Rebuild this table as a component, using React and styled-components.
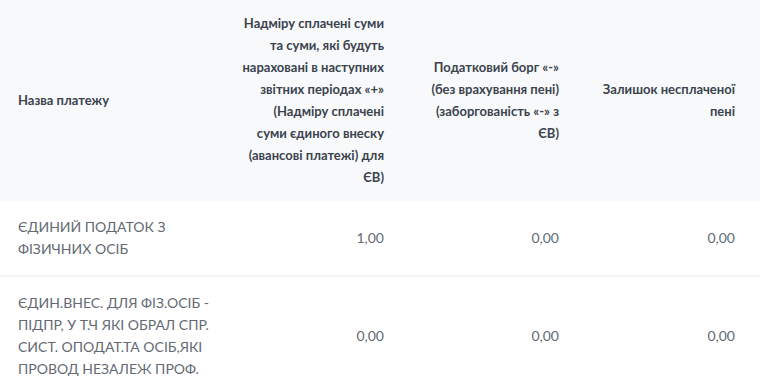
import React from 'react'
import styled, {createGlobalStyle} from 'styled-components'

const GlobalStyle = createGlobalStyle`
  html, body {
    margin: 0;
    padding: 0;
    background: #ffffff;
  }
  body {
    font-family: Lato, "Noto Sans", sans-serif;
  }
`

// titles kept as line lists so the wraps match the original table
const columns = [
    {key: 'name', align: 'left', title: ['Назва платежу']},
    {key: 'overpaid', align: 'right', title: [
        'Надміру сплачені суми',
        'та суми, які будуть',
        'нараховані в наступних',
        'звітних періодах «+»',
        '(Надміру сплачені',
        'суми єдиного внеску',
        '(авансові платежі) для',
        'ЄВ)',
    ]},
    {key: 'debt', align: 'right', title: [
        'Податковий борг «-»',
        '(без врахування пені)',
        '(заборгованість «-» з',
        'ЄВ)',
    ]},
    {key: 'penalty', align: 'right', title: ['Залишок несплаченої', 'пені']},
]

const rows = [
    {name: ['ЄДИНИЙ ПОДАТОК З', 'ФІЗИЧНИХ ОСІБ'], overpaid: '1,00', debt: '0,00', penalty: '0,00'},
    {
        name: [
            'ЄДИН.ВНЕС. ДЛЯ ФІЗ.ОСІБ -',
            'ПІДПР, У Т.Ч ЯКІ ОБРАЛ СПР.',
            'СИСТ. ОПОДАТ.ТА ОСІБ,ЯКІ',
            'ПРОВОД НЕЗАЛЕЖ ПРОФ.',
        ],
        overpaid: '0,00',
        debt: '0,00',
        penalty: '0,00',
    },
]

const Lines = ({lines}) =>
    Array.isArray(lines) ? lines.map((l, i) => <Line key={i}>{l}</Line>) : lines

export default function App() {
    return (
        <>
            <GlobalStyle />
            <Table>
                <HeaderRow>
                    {columns.map((c) => (
                        <HeadCell key={c.key} $align={c.align}>
                            <div><Lines lines={c.title} /></div>
                        </HeadCell>
                    ))}
                </HeaderRow>
                {rows.map((r, i) => (
                    <BodyRow key={i}>
                        {columns.map((c) => (
                            <BodyCell key={c.key} $align={c.align}>
                                <div><Lines lines={r[c.key]} /></div>
                            </BodyCell>
                        ))}
                    </BodyRow>
                ))}
            </Table>
        </>
    )
}

const Table = styled.div`
    width: 760px;
    display: flex;
    flex-direction: column;
`

const gridCols = '222px 180px 175px 183px'

const HeaderRow = styled.div`
    display: grid;
    grid-template-columns: ${gridCols};
    background: #f8f9fb;
`

const BodyRow = styled.div`
    display: grid;
    grid-template-columns: ${gridCols};
    background: #ffffff;
    border-bottom: 2px solid #f1f2f4;
`

const Line = styled.span`
    display: block;
    white-space: nowrap;
`

const Cell = styled.div`
    display: flex;
    align-items: center;
    justify-content: ${({$align}) => ($align === 'right' ? 'flex-end' : 'flex-start')};
    text-align: ${({$align}) => $align};
    line-height: 22px;
    padding-left: ${({$align}) => ($align === 'right' ? '8px' : '18px')};
    padding-right: 18px;
    &:last-child {
        padding-right: 25px;
    }
`

const HeadCell = styled(Cell)`
    padding-top: 12px;
    padding-bottom: 13px;
    font-size: 13px;
    color: #3b434e;
    font-weight: 700;
`

const BodyCell = styled(Cell)`
    padding-top: 15px;
    padding-bottom: 15px;
    font-size: 14px;
    color: #646a73;
    font-weight: 400;
`
